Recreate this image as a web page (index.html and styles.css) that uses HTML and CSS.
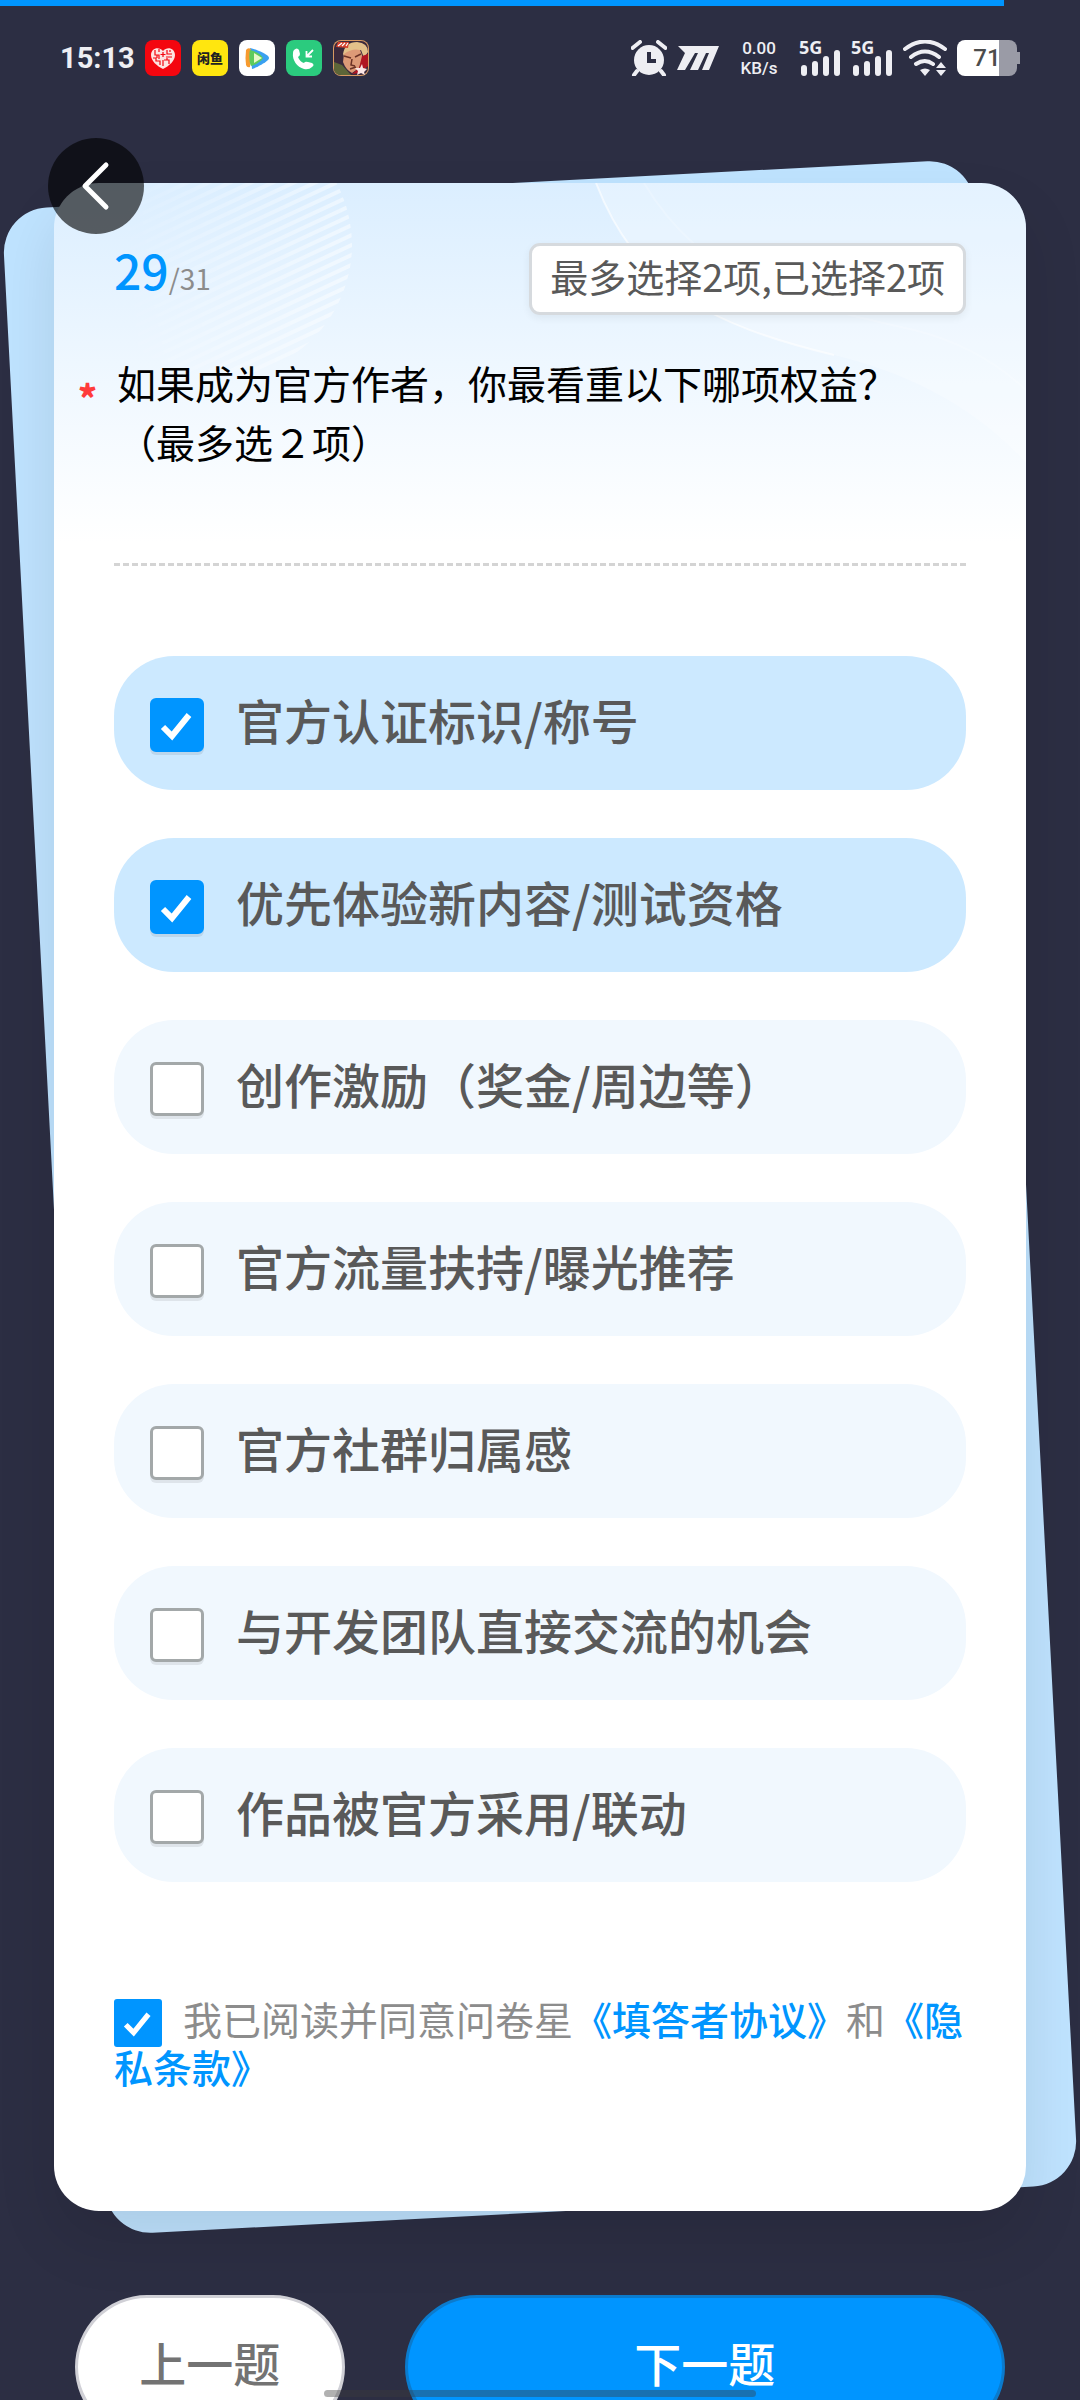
FILE: index.html
```html
<!DOCTYPE html>
<html lang="zh-CN">
<head>
  <meta charset="UTF-8" />
  <meta name="viewport" content="width=device-width, initial-scale=1" />
  <title>问卷星</title>
  <link rel="stylesheet" href="styles.css">
</head>
<body>

<div class="progress"><div class="progress-bar" style="width: 93%"></div></div>

<!-- Status bar -->
<header class="status">
  <span class="time">15:13</span>
  <div class="apps">
    <svg class="app" viewBox="0 0 36 36">
      <rect width="36" height="36" rx="8" fill="#f4060f"/>
      <path d="M18 29C12 26 6 21 6 15c0-7 8-9 12-4 4-5 12-3 12 4 0 6-6 11-12 14z" fill="#fde4e2"/>
      <path d="M10 10v5h4v4M14 9v3M22 10v4h5M18 12v5M15.500 14.500h5M8 18h3v3h4v4M21 17h6M19 20h5v4M18 20v6M22 20v-2M12 15v3M25 12v-2" fill="none" stroke="#f4060f" stroke-width="1.200"/>
    </svg>
    <span class="app app-fish">闲鱼</span>
    <svg class="app" viewBox="0 0 36 36">
      <rect width="36" height="36" rx="8" fill="#fff"/>
      <path d="M11 8c6 1 16 6 18 8q2 2 0 4c-3 3-12 8-16 9z" fill="#3aa0f0"/>
      <path d="M7 10q2-3 5-1l-1 18q-3 1-4-2-1-7 0-15z" fill="#f79a2e"/>
      <path d="M11 10c5 1 11 4 13 8-2 4-8 7-12 8-2-3-2-13-1-16z" fill="#5ecb5c"/>
      <path d="M15 13l8 5-8 5z" fill="#e9f9c8"/>
    </svg>
    <svg class="app" viewBox="0 0 36 36">
      <rect width="36" height="36" rx="8" fill="#2bcb7e"/>
      <path d="M8 10q3-3 5 0l1 4q0 2-2 3 2 5 6 6 1-2 4-1l4 1q3 2 0 4-3 3-8 2C11 27 6 20 7 13q0-2 1-3z" fill="#fff"/>
      <path d="M27 10l-6 6M20.500 11v5.500H26" fill="none" stroke="#fff" stroke-width="1.800"/>
    </svg>
    <svg class="app" viewBox="0 0 36 36">
      <rect width="36" height="36" rx="8" fill="#d99a62"/>
      <rect x="1" y="1" width="34" height="34" rx="7" fill="#3b2a3c"/>
      <path d="M10 14q2-12 14-12 11 1 11 10l-4 6-3-8-12 4-3 6z" fill="#e3c18a"/>
      <path d="M11 14q8-6 16-4l3 8-4 10-7 5q-6-3-9-11z" fill="#dd9a77"/>
      <path d="M11 16l7 2M22 17l6-3M19 19l-1 6 4 1M17 29l6-2" fill="none" stroke="#6b3226" stroke-width="1.500"/>
      <path d="M29 16l6-2v12l-8 7-8 1 7-6z" fill="#b01522"/>
      <path d="M1 22l8 3 9 10H8q-7 0-7-7z" fill="#5d6638"/>
      <path d="M3 7l2-5h11l-1 6z" fill="#d4412c"/>
      <path d="M5 6l4-3M9 6l3-3M13 6l2-3" stroke="#fff" stroke-width="1.200"/>
      <path d="M29 24l1 4 4 1-3 3 1 3-4-2-4 2 1-4-3-3h5z" fill="#fbe6e6"/>
    </svg>
  </div>
  <div class="system">
    <svg width="36" height="36" viewBox="0 0 36 36">
      <circle cx="18" cy="20" r="15" fill="#eeeef3"/>
      <path d="M18 12v9h7" fill="none" stroke="#2c2e43" stroke-width="4"/>
      <path d="M1.500 8L9 2M34.500 8L27 2M6 31l-3 4M30 31l3 4" stroke="#eeeef3" stroke-width="4" stroke-linecap="round"/>
    </svg>
    <svg width="42" height="36" viewBox="0 0 42 36">
      <path d="M1 6H42L32 30H25L32 13H29L21 30H13L21 13H18L8 30H0L8 13z" fill="#eeeef3"/>
    </svg>
    <span class="speed">0.00<br>KB/s</span>
    <span class="signal">5G
      <svg width="42" height="26" viewBox="0 0 42 26">
        <path d="M5 18v5M16 14v9M27 9v14M38 3v20" stroke="#eeeef3" stroke-width="6" stroke-linecap="round"/>
      </svg>
    </span>
    <span class="signal">5G
      <svg width="42" height="26" viewBox="0 0 42 26">
        <path d="M5 18v5M16 14v9M27 9v14M38 3v20" stroke="#eeeef3" stroke-width="6" stroke-linecap="round"/>
      </svg>
    </span>
    <svg width="44" height="36" viewBox="0 0 44 36">
      <path d="M2 9q20-15 40 0M8 17q14-11 28 0M13 24q9-6 17 0" fill="none" stroke="#eeeef3" stroke-width="4" stroke-linecap="round"/>
      <path d="M17 30q5-3 10 0l-5 6zM38 22l5 6H33zM38 36l5-6H33z" fill="#eeeef3"/>
    </svg>
    <span class="battery">71</span>
  </div>
</header>

<button class="back" type="button" aria-label="返回">
  <svg width="96" height="96" viewBox="0 0 96 96">
    <path d="M58 27L37 48l21 21" fill="none" stroke="#fff" stroke-width="5" stroke-linecap="round" stroke-linejoin="round"/>
  </svg>
</button>

<form class="survey">
  <div class="sheet">
    <div class="card">
      <svg class="deco" viewBox="0 0 972 360">
        <defs>
          <pattern id="stripes" width="9" height="9" patternUnits="userSpaceOnUse" patternTransform="rotate(-25)">
            <rect width="9" height="4" fill="#fff"/>
          </pattern>
          <linearGradient id="fade">
            <stop offset="0.2" stop-color="#fff" stop-opacity="0"/>
            <stop offset="1" stop-color="#fff" stop-opacity="0.5"/>
          </linearGradient>
          <mask id="fadeMask"><rect width="300" height="360" fill="url(#fade)"/></mask>
        </defs>
        <g mask="url(#fadeMask)"><circle cx="166" cy="62" r="132" fill="url(#stripes)"/></g>
        <path d="M542 0C582 104 656 142 780 172c70 17 140 50 192 108V0z" fill="#fff" opacity="0.25"/>
        <path d="M542 0C582 104 656 142 780 172" fill="none" stroke="#fff" stroke-width="2" opacity="0.6"/>
        <path d="M590 0c60 100 150 120 270 147 40 10 80 30 112 60" fill="none" stroke="#fff" stroke-width="2" opacity="0.2"/>
      </svg>

      <div class="top">
        <div class="count"><b>29</b>/31</div>
        <div class="tip">最多选择2项,已选择2项</div>
      </div>

      <fieldset>
        <legend class="question"><span class="star">*</span>如果成为官方作者，你最看重以下哪项权益？<br>（最多选２项）</legend>
        <div class="options">
          <label class="option"><input type="checkbox" checked><span>官方认证标识/称号</span></label>
          <label class="option"><input type="checkbox" checked><span>优先体验新内容/测试资格</span></label>
          <label class="option"><input type="checkbox"><span>创作激励（奖金/周边等）</span></label>
          <label class="option"><input type="checkbox"><span>官方流量扶持/曝光推荐</span></label>
          <label class="option"><input type="checkbox"><span>官方社群归属感</span></label>
          <label class="option"><input type="checkbox"><span>与开发团队直接交流的机会</span></label>
          <label class="option"><input type="checkbox"><span>作品被官方采用/联动</span></label>
        </div>
      </fieldset>

      <div class="agree">
        <input type="checkbox" id="agree" checked><label for="agree">我已阅读并同意问卷星</label><a href="#">《填答者协议》</a>和<a href="#">《隐私条款》</a>
      </div>
    </div>
  </div>

  <div class="buttons">
    <button type="button" class="btn prev">上一题</button>
    <button type="button" class="btn next">下一题</button>
  </div>
</form>

<div class="home-bar"></div>

</body>
</html>
```

FILE: styles.css
```css
* {
  box-sizing: border-box;
}
html {
  scrollbar-width: none;
}
body {
  margin: 0;
  background: #2c2e43;
  color: #595959;
  font-family: "Noto Sans CJK SC", sans-serif;
  font-size: 39px;
  overflow-x: hidden;
}
button, input {
  font: inherit;
  margin: 0;
}

.progress {
  height: 6px;
}
.progress-bar {
  height: 6px;
  background: #0095ff;
}

/* Status bar */
.status {
  display: flex;
  align-items: center;
  height: 104px;
  padding: 0 60px;
  margin-bottom: 73px;
  color: #eeeef3;
}
.time {
  font-family: Roboto, sans-serif;
  font-size: 29px;
  font-weight: 700;
  width: 85px;
  white-space: nowrap;
}
.apps {
  display: flex;
  gap: 11px;
}
.app {
  width: 36px;
  height: 36px;
}
.app-fish {
  border-radius: 8px;
  background: #ffe60f;
  color: #222;
  font-size: 13px;
  font-weight: 900;
  line-height: 36px;
  text-align: center;
}
.system {
  display: flex;
  align-items: center;
  gap: 10px;
  margin-left: auto;
}
.speed {
  width: 60px;
  font-family: Roboto, sans-serif;
  font-size: 17px;
  font-weight: 500;
  line-height: 20px;
  text-align: center;
}
.signal {
  position: relative;
  width: 42px;
  height: 36px;
  font-family: "Open Sans", sans-serif;
  font-size: 18px;
  font-weight: 700;
  line-height: 14px;
}
.signal svg {
  position: absolute;
  left: 0;
  bottom: 0;
}
.battery {
  position: relative;
  width: 60px;
  height: 36px;
  margin-right: 3px;
  border-radius: 8px;
  background: linear-gradient(90deg, #fff 70%, #9a9ba6 70%);
  color: #4c4c4c;
  font-family: Roboto, sans-serif;
  font-size: 24px;
  font-weight: 500;
  line-height: 36px;
  text-align: center;
}
.battery::after {
  content: "";
  position: absolute;
  right: -3px;
  top: 12px;
  width: 3px;
  height: 12px;
  background: #9a9ba6;
}

.back {
  position: absolute;
  left: 48px;
  top: 138px;
  z-index: 10;
  width: 96px;
  height: 96px;
  padding: 0;
  border: none;
  border-radius: 50%;
  background: rgba(0,0,0,0.62);
  cursor: pointer;
}
.back svg {
  display: block;
}

/* Paper card with a tilted sheet behind it */
.survey {
  overflow-x: clip;
}
.sheet {
  position: relative;
  z-index: 0;
  margin: 0 5%;
}
.sheet::before {
  content: "";
  position: absolute;
  inset: 0;
  z-index: -1;
  border-radius: 45px;
  background: #bfe3ff;
  transform: rotate(-3deg);
}
.card {
  position: relative;
  padding: 60px 60px 119px;
  border-radius: 45px;
  background: linear-gradient(#dbeeff, #eef7ff 180px, #fff 360px);
  box-shadow: 0 30px 60px rgba(0,0,0,0.1);
}
.deco {
  position: absolute;
  left: 0;
  top: 0;
  width: 100%;
  border-radius: 45px 45px 0 0;
}

.top {
  position: relative;
  display: flex;
  justify-content: space-between;
  align-items: center;
  height: 72px;
  margin-bottom: 38px;
}
.count {
  color: #8c8c8c;
  font-size: 28px;
  line-height: 48px;
  padding-bottom: 12px;
}
.count b {
  color: #0095ff;
  font-size: 48px;
  font-weight: 500;
}
.tip {
  height: 72px;
  padding: 0 18px;
  border: 3px solid #d6dade;
  border-radius: 11px;
  background: #fff;
  box-shadow: 0 3px 9px rgba(0,0,0,0.06);
  font-size: 38px;
  line-height: 60px;
}

fieldset {
  position: relative;
  min-width: 0;
  margin: 0;
  padding: 0;
  border: none;
}
.question {
  position: relative;
  width: 100%;
  padding: 0 0 92px 3px;
  border-bottom: 3px dashed #d4d4d4;
  color: #000;
  line-height: 59px;
}
.star {
  position: absolute;
  left: -36px;
  top: 14px;
  color: #ff3b3b;
  font-weight: 900;
  font-size: 36px;
}
.options {
  display: grid;
  gap: 48px;
  margin-top: 90px;
}
.option {
  display: flex;
  align-items: center;
  gap: 32px;
  min-height: 134px;
  padding: 4px 36px 0;
  border-radius: 60px;
  background: #f1f8fe;
  font-size: 48px;
  font-weight: 500;
  line-height: 60px;
  cursor: pointer;
}
.option span {
  padding-bottom: 12px;
}
.option:has(:checked) {
  background: #cce9ff;
}

input[type="checkbox"] {
  appearance: none;
  flex: none;
  width: 54px;
  height: 54px;
  border: 3px solid #a3a8a9;
  border-radius: 6px;
  background: #fff;
  box-shadow: 0 3px 0 rgba(0,0,0,0.08);
}
input[type="checkbox"]:checked {
  border-color: #0095ff;
  background: #0095ff url("data:image/svg+xml,%3Csvg xmlns='http://www.w3.org/2000/svg' viewBox='0 0 48 48'%3E%3Cpath d='M10 26l9 9L36 14' fill='none' stroke='white' stroke-width='6'/%3E%3C/svg%3E") center / 100% no-repeat;
}

.agree {
  position: relative;
  margin-top: 117px;
  color: #8c8c8c;
  font-family: "Liberation Sans", "Noto Sans CJK SC", sans-serif;
  line-height: 45px;
}
.agree input[type="checkbox"] {
  width: 48px;
  height: 48px;
  margin-right: 21px;
  border-radius: 3px;
  box-shadow: none;
  vertical-align: -12px;
}
.agree a {
  color: #0095ff;
  font-weight: 500;
  text-decoration: none;
}

.buttons {
  display: flex;
  gap: 60px;
  padding: 84px 75px 0;
}
.btn {
  width: 29%;
  height: 144px;
  padding: 0 0 9px;
  border: 3px solid #d0d0d6;
  border-bottom-width: 6px;
  border-radius: 72px;
  background: #fff;
  color: #737373;
  font-size: 47px;
  font-weight: 500;
  cursor: pointer;
}
.btn.next {
  flex: 1;
  border-color: #0b7bcd;
  background: #0095ff;
  color: #fff;
}

.home-bar {
  position: fixed;
  left: 30%;
  right: 30%;
  bottom: 3px;
  z-index: 20;
  height: 7px;
  border-radius: 4px;
  background: rgba(60,60,60,0.4);
}
```
